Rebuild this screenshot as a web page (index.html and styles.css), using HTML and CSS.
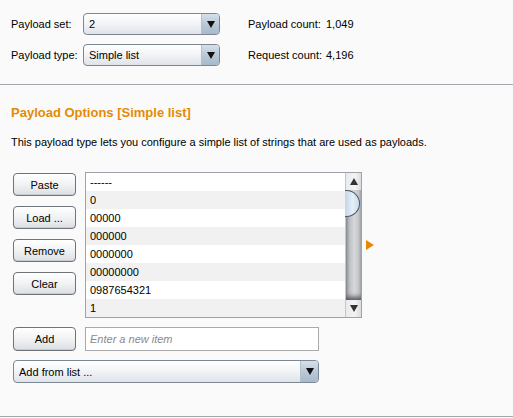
FILE: index.html
```html
<!DOCTYPE html>
<html>
<head>
<meta charset="utf-8">
<link rel="stylesheet" href="styles.css">
</head>
<body>
<div class="top">
  <div class="row">
    <span class="lbl">Payload set:</span>
    <div class="combo w136"><span class="ctext">2</span><span class="carrow"><i></i></span></div>
    <span class="rlbl">Payload count:</span><span class="val">1,049</span>
  </div>
  <div class="row">
    <span class="lbl">Payload type:</span>
    <div class="combo w136"><span class="ctext">Simple list</span><span class="carrow"><i></i></span></div>
    <span class="rlbl">Request count:</span><span class="val">4,196</span>
  </div>
</div>
<div class="sep"></div>
<div class="section">
  <h2 class="heading">Payload Options [Simple list]</h2>
  <p class="desc">This payload type lets you configure a simple list of strings that are used as payloads.</p>
  <div class="listarea">
    <div class="btns">
      <button class="btn">Paste</button>
      <button class="btn">Load ...</button>
      <button class="btn">Remove</button>
      <button class="btn">Clear</button>
    </div>
    <div class="list">
      <div class="items">
        <div class="item">------</div>
        <div class="item">0</div>
        <div class="item">00000</div>
        <div class="item">000000</div>
        <div class="item">0000000</div>
        <div class="item">00000000</div>
        <div class="item">0987654321</div>
        <div class="item">1</div>
      </div>
      <div class="sbar">
        <div class="sup"><i></i></div>
        <div class="track"><div class="thumb"></div></div>
        <div class="sdown"><i></i></div>
      </div>
    </div>
    <div class="marker"></div>
  </div>
  <div class="addrow">
    <button class="btn addbtn">Add</button>
    <div class="input">Enter a new item</div>
  </div>
  <div class="combo wide"><span class="ctext">Add from list ...</span><span class="carrow"><i></i></span></div>
</div>
<div class="sep bottom"></div>
</body>
</html>
```
FILE: styles.css
```css
html, body {
  margin: 0;
  padding: 0;
  background: #fafafa;
  font-family: "Liberation Sans", Arial, sans-serif;
  font-size: 11px;
  color: #000;
}
.top {
  padding: 13px 0 0 11px;
  display: flex;
  flex-direction: column;
  gap: 9px;
}
.row {
  display: flex;
  align-items: center;
  height: 22px;
}
.lbl {
  width: 72px;
}
.rlbl {
  margin-left: 28px;
  width: 78px;
}
.combo {
  box-sizing: border-box;
  height: 22px;
  border: 1px solid #7d8793;
  border-radius: 4px;
  background: linear-gradient(#ffffff, #f3f5f7 45%, #dfe3e8);
  display: flex;
  align-items: center;
  overflow: hidden;
}
.w136 { width: 137px; }
.ctext {
  flex: 1;
  padding-left: 5px;
  white-space: nowrap;
}
.carrow {
  width: 17px;
  align-self: stretch;
  border-left: 1px solid #b4c0cc;
  background: linear-gradient(#d6e0ea, #b9c9d8 50%, #a7b9ca);
  display: flex;
  align-items: center;
  justify-content: center;
}
.carrow i, .sup i, .sdown i {
  display: block;
  width: 0;
  height: 0;
  border-left: 4px solid transparent;
  border-right: 4px solid transparent;
  border-top: 7px solid #111;
}
.sep {
  height: 1px;
  background: #a3a7ad;
  margin-top: 18px;
}
.sep.bottom {
  margin-top: 33px;
}
.section {
  padding: 20px 0 0 11px;
}
.heading {
  margin: 0;
  font-size: 13px;
  line-height: 16px;
  font-weight: bold;
  color: #e58a05;
}
.desc {
  margin: 14px 0 0 0;
  line-height: 14px;
}
.listarea {
  display: flex;
  align-items: flex-start;
  margin-top: 23px;
}
.btns {
  display: flex;
  flex-direction: column;
  gap: 10px;
  padding-top: 1px;
  margin-left: 2px;
}
.btn {
  box-sizing: border-box;
  width: 63px;
  height: 23px;
  border: 1px solid #6f747b;
  border-radius: 4px;
  background: linear-gradient(#ffffff, #f1f2f4 50%, #dcdfe3);
  box-shadow: inset 0 -1px 0 #c8ccd1;
  font-family: "Liberation Sans", Arial, sans-serif;
  font-size: 11px;
  color: #000;
  padding: 0;
}
.list {
  box-sizing: border-box;
  margin-left: 9px;
  width: 277px;
  height: 146px;
  border: 1px solid #9ea2a9;
  background: #fff;
  display: flex;
  overflow: hidden;
}
.items {
  flex: 1;
}
.item {
  height: 18px;
  line-height: 18px;
  padding-left: 4px;
}
.item:nth-child(even) {
  background: #f1f1f1;
}
.sbar {
  width: 15px;
  display: flex;
  flex-direction: column;
  border-left: 1px solid #c4c6ca;
}
.sup, .sdown {
  height: 17px;
  background: linear-gradient(90deg, #e9eaec, #f4f4f5 60%, #d9dbde);
  display: flex;
  align-items: center;
  justify-content: center;
}
.sup i {
  border-top: 0;
  border-bottom: 7px solid #333;
}
.sdown i {
  border-top-color: #333;
}
.track {
  flex: 1;
  position: relative;
  background: linear-gradient(90deg, #8e9196, #bfc1c5 25%, #d6d8db 55%, #c3c5c9 85%, #a9acb1);
  box-shadow: inset 0 -6px 5px -3px #555;
}
.thumb {
  position: absolute;
  top: 0;
  left: -1px;
  width: 15px;
  height: 27px;
  box-sizing: border-box;
  border: 1px solid #4b5b6b;
  border-left: 0;
  border-radius: 0 14px 14px 0;
  background: linear-gradient(90deg, #c2d6e8, #e6eff7 55%, #c9dcee);
}
.marker {
  width: 0;
  height: 0;
  margin: 68px 0 0 4px;
  border-top: 5px solid transparent;
  border-bottom: 5px solid transparent;
  border-left: 8px solid #e58a05;
}
.addrow {
  display: flex;
  align-items: flex-start;
  margin-top: 9px;
  margin-left: 2px;
}
.addbtn {
  height: 24px;
}
.input {
  box-sizing: border-box;
  margin-left: 9px;
  width: 234px;
  height: 24px;
  border: 1px solid #a8aaad;
  background: #fff;
  color: #8a8a8a;
  font-style: italic;
  line-height: 22px;
  padding-left: 4px;
}
.combo.wide {
  margin: 9px 0 0 2px;
  width: 306px;
  height: 23px;
}
```
